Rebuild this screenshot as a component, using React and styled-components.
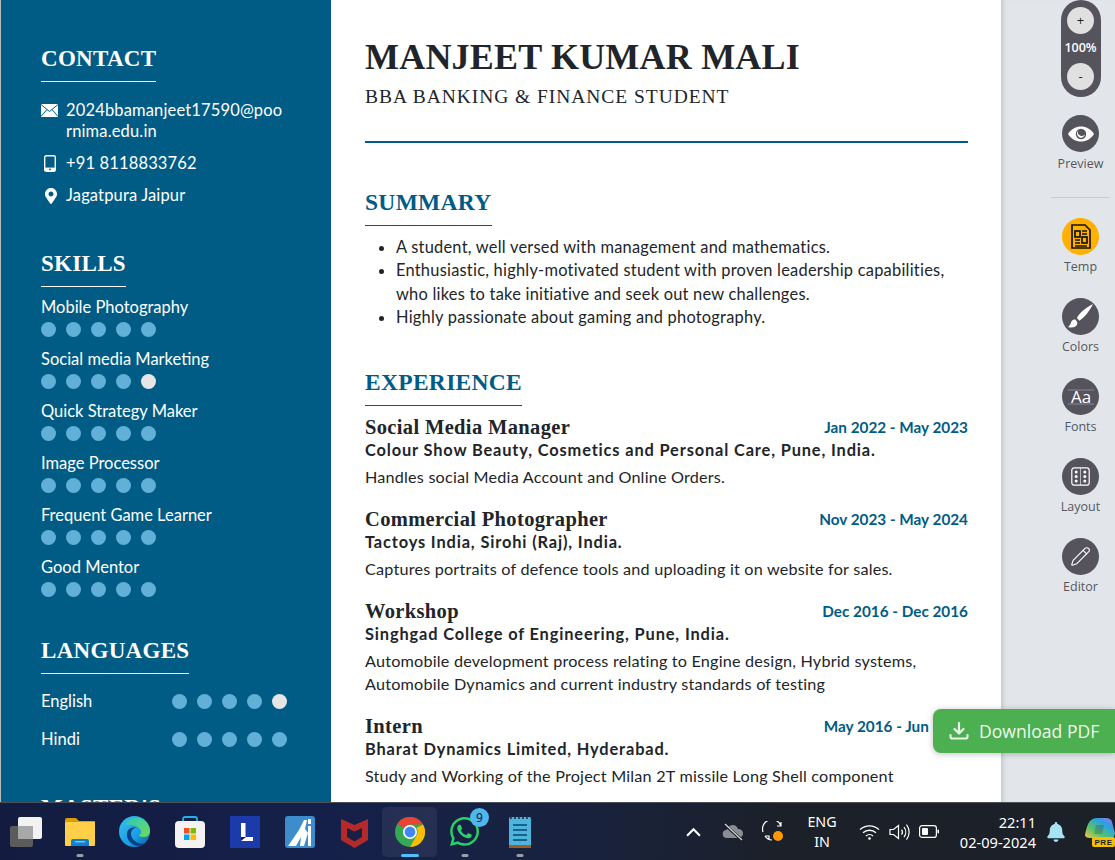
import React from "react";
import styled, { createGlobalStyle } from "styled-components";
import { FaMapMarkerAlt, FaWhatsapp, FaBell } from "react-icons/fa";
import { Pencil } from "lucide-react";

const BLUE = "#005c85";
const BODY = `"Lato", "Noto Sans", sans-serif`;
const SERIF = `"Liberation Serif", "DejaVu Serif", serif`;
const UI = `"Open Sans", "Noto Sans", sans-serif`;

const Global = createGlobalStyle`
  html, body { margin: 0; padding: 0; height: 860px; overflow: hidden; background: #fff; }
  * { box-sizing: border-box; }
`;

const Screen = styled.div`
  position: relative;
  width: 1115px;
  height: 860px;
  display: flex;
  flex-direction: column;
  overflow: hidden;
  font-family: ${BODY};
`;
const Workspace = styled.div`
  flex: 0 0 802px;
  display: flex;
  overflow: hidden;
`;

/* left column */
const Sidebar = styled.aside`
  width: 331px;
  flex: none;
  height: 860px;
  background: ${BLUE};
  border-left: 1px solid #b9b9b9;
  padding: 43px 40px 0 40px;
  color: #fff;
`;
const SideTitle = styled.h2`
  display: inline-block;
  margin: ${(p) => p.$top || 0}px 0 0;
  padding-bottom: 7px;
  border-bottom: 1px solid #fff;
  font: 700 23px/31px ${SERIF};
  letter-spacing: 0.3px;
  vertical-align: top;
`;
const ContactList = styled.div`
  margin-top: 18px;
  display: flex;
  flex-direction: column;
  gap: 11px;
`;
const ContactRow = styled.div`
  display: flex;
  font-size: 16.5px;
  line-height: 21px;
  letter-spacing: 0.15px;
  width: 245px;
`;
const ContactIcon = styled.span`
  flex: 0 0 25px;
  height: 21px;
  display: flex;
  align-items: center;
  padding-left: ${(p) => p.$pad || 0}px;
`;
const ContactText = styled.span`
  flex: 1;
  min-width: 0;
  overflow-wrap: anywhere;
`;
const SkillList = styled.div`
  margin-top: 9px;
  display: flex;
  flex-direction: column;
  gap: 11px;
`;
const SkillName = styled.div`
  font-size: 16.5px;
  line-height: 22px;
  margin-bottom: 4px;
`;
const Dots = styled.div`
  display: flex;
  gap: 10px;
`;
const Dot = styled.span`
  width: 15px;
  height: 15px;
  border-radius: 50%;
  background: ${(p) => (p.$off ? "#e6e6e6" : "#60b0d8")};
`;
const LangList = styled.div`
  margin-top: 8px;
`;
const LangRow = styled.div`
  height: 38px;
  width: 246px;
  display: flex;
  align-items: center;
  justify-content: space-between;
  font-size: 16.5px;
`;

/* resume body */
const Sheet = styled.main`
  width: 670px;
  flex: none;
  background: #fff;
  padding: 35px 33px 0 34px;
  color: #212529;
`;
const Name = styled.h1`
  margin: 0;
  font: 700 36px/44px ${SERIF};
  letter-spacing: 0.2px;
`;
const Role = styled.div`
  margin-top: 6px;
  font: 400 19.5px/24px ${SERIF};
  letter-spacing: 0.95px;
`;
const Rule = styled.hr`
  margin: 32px 0 44px;
  border: 0;
  height: 2px;
  background: ${BLUE};
`;
const MainTitle = styled.h2`
  display: inline-block;
  margin: ${(p) => p.$top || 0}px 0 0;
  padding-bottom: 7px;
  border-bottom: 1px solid ${BLUE};
  color: ${BLUE};
  font: 700 23.5px/31px ${SERIF};
  letter-spacing: 0.3px;
  vertical-align: top;
`;
const Bullets = styled.ul`
  margin: 9px 0 0;
  padding: 0 0 0 31px;
  font-size: 16.4px;
  line-height: 23.3px;
  letter-spacing: 0.24px;
`;
const Jobs = styled.div`
  margin-top: 9px;
  display: flex;
  flex-direction: column;
  gap: 19.3px;
`;
const JobHead = styled.div`
  display: flex;
  justify-content: space-between;
  align-items: center;
  height: 24px;
`;
const JobTitle = styled.div`
  font: 700 20.5px/24px ${SERIF};
  letter-spacing: 0.35px;
`;
const JobDate = styled.div`
  color: ${BLUE};
  font-size: 15.3px;
  font-weight: 700;
  white-space: nowrap;
`;
const Company = styled.div`
  font-size: 16.4px;
  font-weight: 700;
  line-height: 22px;
  letter-spacing: 0.85px;
`;
const JobText = styled.div`
  margin-top: 3.8px;
  font-size: 16.2px;
  line-height: 23px;
  letter-spacing: 0.2px;
`;

/* tool rail */
const Rail = styled.nav`
  flex: 1;
  background: #e2e6ea;
  padding-left: 50px;
  box-shadow: inset 5px 0 4px -3px #c3c6ca;
  font-family: ${UI};
`;
const RailCol = styled.div`
  width: 59px;
  display: flex;
  flex-direction: column;
  align-items: center;
`;
const ZoomPill = styled.div`
  width: 40px;
  height: 97px;
  border-radius: 20px;
  background: #55535c;
  padding-top: 7px;
  display: flex;
  flex-direction: column;
  align-items: center;
  color: #fff;
  margin-bottom: 18px;
`;
const ZoomBtn = styled.div`
  width: 27px;
  height: 27px;
  border-radius: 50%;
  background: #e0e0e0;
  color: #222;
  font-size: 13px;
  line-height: 27px;
  text-align: center;
`;
const ZoomValue = styled.div`
  font-size: 12.5px;
  font-weight: 600;
  line-height: 27px;
  margin-bottom: 2px;
  white-space: nowrap;
`;
const Tool = styled.div`
  width: 59px;
  height: 56px;
  display: flex;
  flex-direction: column;
  align-items: center;
  margin-bottom: ${(p) => p.$after || 24}px;
`;
const ToolCircle = styled.div`
  width: 37px;
  height: 37px;
  flex: none;
  border-radius: 50%;
  background: ${(p) => (p.$active ? "#ffb000" : "#55535c")};
  color: #fff;
  display: flex;
  align-items: center;
  justify-content: center;
`;
const ToolLabel = styled.div`
  margin-top: 4px;
  font-size: 12.5px;
  line-height: 16px;
  color: #55585c;
`;
const RailDivider = styled.div`
  width: 59px;
  height: 1px;
  background: #c9cdd1;
  margin: 0 0 20px;
`;

const DownloadBtn = styled.button`
  position: absolute;
  right: 0;
  top: 709px;
  width: 182px;
  height: 44px;
  border: 0;
  border-radius: 8px 0 0 8px;
  background: #4caf50;
  color: #f1f8f1;
  display: flex;
  align-items: center;
  gap: 10px;
  padding: 0 0 0 16px;
  font: 400 17.6px ${UI};
  box-shadow: 0 1px 6px rgba(0, 0, 0, 0.25);
`;

/* windows taskbar */
const Taskbar = styled.footer`
  position: relative;
  flex: 0 0 58px;
  display: flex;
  align-items: center;
  justify-content: space-between;
  border-top: 1px solid #4b4f58;
  background: linear-gradient(90deg, #131c40 0%, #15204a 30%, #18223f 50%, #1b2029 70%, #1b2029 100%);
  color: #fff;
  font-family: "Noto Sans", "Open Sans", sans-serif;
`;
const AppRow = styled.div`
  display: flex;
`;
const AppSlot = styled.div`
  position: relative;
  width: ${(p) => p.$w || 55}px;
  height: 50px;
  display: flex;
  align-items: center;
  justify-content: center;
  border-radius: 5px;
  background: ${(p) => (p.$active ? "rgba(255,255,255,0.07)" : "transparent")};
  &::after {
    content: "";
    display: ${(p) => (p.$dot ? "block" : "none")};
    position: absolute;
    bottom: 0;
    left: 50%;
    transform: translateX(-50%);
    width: ${(p) => (p.$active ? 18 : 7)}px;
    height: 3px;
    border-radius: 2px;
    background: ${(p) => (p.$active ? "#4cc2ff" : "#9a9ea8")};
  }
`;
const Badge = styled.span`
  position: absolute;
  top: 1px;
  right: 3px;
  width: 19px;
  height: 19px;
  border-radius: 50%;
  background: #4fb6ee;
  color: #10202e;
  font-size: 12px;
  line-height: 19px;
  text-align: center;
`;
const Tray = styled.div`
  display: flex;
  align-items: center;
  height: 100%;
`;
const TrayIcon = styled.div`
  width: ${(p) => p.$w}px;
  margin-right: ${(p) => p.$gap || 0}px;
  display: flex;
  justify-content: center;
  align-items: center;
`;
const Lang = styled.div`
  width: 54px;
  margin: 0 5px 0 2px;
  text-align: center;
  font-size: 14.3px;
  line-height: 20px;
`;
const Clock = styled.div`
  width: 84px;
  margin-right: 5px;
  text-align: right;
  font-size: 14.6px;
  line-height: 20px;
  white-space: nowrap;
`;

const Mail = () => (
  <svg width="17" height="13" viewBox="0 0 17 13">
    <rect width="17" height="13" fill="#fff" />
    <path d="M0 .5 8.5 7.5 17 .5M0 12.5 6 5.5M17 12.5 11 5.5" fill="none" stroke={BLUE} strokeWidth="1" />
  </svg>
);
const Phone = () => (
  <svg width="12" height="17" viewBox="0 0 12 17">
    <rect x=".7" y=".7" width="10.6" height="15.6" rx="1.6" fill="none" stroke="#fff" strokeWidth="1.4" />
    <rect x="1" y="12.6" width="10" height="3.4" fill="#fff" />
    <circle cx="6" cy="14.4" r=".9" fill={BLUE} />
  </svg>
);
const Eye = () => (
  <svg width="26" height="16" viewBox="0 0 26 16">
    <path d="M0 8C3 3 8 .5 13 .5S23 3 26 8c-3 5-8 7.500-13 7.500S3 13 0 8Z" fill="#fff" />
    <circle cx="13" cy="8" r="5.200" fill="#55535c" />
    <path d="M10.500 4.500a4 4 0 1 0 6.500 3.500 3.500 3.500 0 0 1-6.500-3.500Z" fill="#fff" />
  </svg>
);
const TemplateDoc = () => (
  <svg width="20" height="25" viewBox="0 0 20 25" fill="none" stroke="#161205" strokeWidth="1.700">
    <path d="M1 1h13l5 5v18H1Z" />
    <rect x="4" y="7" width="5" height="6" />
    <rect x="11" y="13" width="5" height="6" />
    <path d="M11 7h5M11 10h5M4 16h5M4 19h5M4 22h12" />
  </svg>
);
const Brush = () => (
  <svg width="25" height="25" viewBox="0 0 24 24" fill="#fff">
    <path d="M24 0C17 3.500 11 8.500 8.500 13.500l2.500 2.500C15.500 13 20.500 7 24 0Z" />
    <path d="M7 14.800c-3 0-4 2-4.500 4C2.200 20.300 1 21.300 0 22c3 1.200 7 .7 8.500-1.800 1-1.500.5-3.400-1.500-5.400Z" />
  </svg>
);
const FontsGlyph = () => (
  <svg width="30" height="30" viewBox="0 0 30 30">
    <path d="M2 8h26M2 22h26" stroke="#8b8a90" strokeWidth="1" />
    <text x="15" y="21" textAnchor="middle" fill="#fff" fontFamily="Open Sans, sans-serif" fontSize="17">Aa</text>
  </svg>
);
const LayoutGlyph = () => (
  <svg width="19" height="19" viewBox="0 0 19 19" fill="none" stroke="#fff" strokeWidth="1.200">
    <rect x=".8" y=".8" width="17.400" height="17.400" rx="2.500" />
    <path d="M9.500 1v17" strokeWidth=".6" />
    {[5, 9.5, 14].map((y) =>
      [5.2, 13.8].map((x) => <circle key={`${x}-${y}`} cx={x} cy={y} r="1.500" fill="#fff" stroke="none" />)
    )}
  </svg>
);
const DownloadIcon = () => (
  <svg width="20" height="18" viewBox="0 0 20 18" fill="none" stroke="#e8f5e9" strokeWidth="2.200" strokeLinecap="round" strokeLinejoin="round">
    <path d="M10 1v10M5.500 7 10 11.500 14.500 7M1.500 13v1.500a2 2 0 0 0 2 2h13a2 2 0 0 0 2-2V13" />
  </svg>
);

const TaskView = () => (
  <svg width="32" height="30" viewBox="0 0 32 30">
    <rect y="9" width="23" height="21" rx="2" fill="#5b5b5b" />
    <rect x="8" width="24" height="22" rx="2" fill="#f2f2f2" />
    <rect x="8" y="9" width="15" height="13" fill="#a8a8a8" />
  </svg>
);
const Folder = () => (
  <svg width="30" height="28" viewBox="0 0 30 28">
    <path d="M0 2a2 2 0 0 1 2-2h9l3 3h16v4H0Z" fill="#d99e06" />
    <rect y="4" width="30" height="24" rx="1" fill="#ffcf48" />
    <path d="M6 28v-5a2 2 0 0 1 2-2h14a2 2 0 0 1 2 2v5Z" fill="#0f80d4" />
    <rect x="10" y="23" width="10" height="1.500" fill="#7cc6f2" />
  </svg>
);
const Edge = () => (
  <svg width="31" height="31" viewBox="0 0 31 31">
    <defs>
      <linearGradient id="edgeA" x1="0" y1="0" x2="1" y2="1">
        <stop offset="0" stopColor="#35c1f1" />
        <stop offset=".6" stopColor="#1b9de2" />
        <stop offset="1" stopColor="#0c59a4" />
      </linearGradient>
      <linearGradient id="edgeB" x1="0" y1="0" x2="1" y2="1">
        <stop offset="0" stopColor="#2fc7c1" />
        <stop offset="1" stopColor="#6fdc4f" />
      </linearGradient>
    </defs>
    <circle cx="15.500" cy="15.500" r="15.500" fill="url(#edgeA)" />
    <path d="M6 9C9 3 17 0 23 3c5 2.500 8 7 8 12 0 3-2 6-6 6-3 0-5-1-5-2 2-1 3-3 1-6-3-4-10-5-15-4Z" fill="url(#edgeB)" />
    <path d="M12 18c0-4 3-7 7-6-4-2-10 0-11 5-1 6 4 12 11 13 3 0 6-1 8-3-3 1-7 1-10-1-3-2-5-5-5-8Z" fill="#0b3f86" />
  </svg>
);
const Store = () => (
  <svg width="30" height="32" viewBox="0 0 30 32">
    <path d="M8 7V3a2 2 0 0 1 2-2h10a2 2 0 0 1 2 2v4" fill="none" stroke="#2aaee6" strokeWidth="1.800" />
    <rect y="5" width="30" height="27" rx="4" fill="#f5f3f1" />
    <rect x="9" y="12" width="5.500" height="5.500" fill="#f25022" />
    <rect x="15.500" y="12" width="5.500" height="5.500" fill="#7fba00" />
    <rect x="9" y="18.500" width="5.500" height="5.500" fill="#00a4ef" />
    <rect x="15.500" y="18.500" width="5.500" height="5.500" fill="#ffb900" />
  </svg>
);
const LApp = () => (
  <svg width="30" height="32" viewBox="0 0 30 32">
    <rect width="30" height="32" fill="#1c3aa9" />
    <path d="M11 7h4.500v14H23v4H11Z" fill="#fff" />
    <path d="M11 25l5-4H11Z" fill="#0f2170" />
  </svg>
);
const AiApp = () => (
  <svg width="30" height="32" viewBox="0 0 30 32">
    <rect width="30" height="32" rx="3" fill="#3d8ccb" />
    <path d="M3 30 14 14l5-10h3l-2 9 3 4-4 13h-4l1-9-5 9Z" fill="#fff" />
    <path d="M23 3h3v5h-3ZM23 10h3v20h-3Z" fill="#fff" />
  </svg>
);
const McAfee = () => (
  <svg width="27" height="32" viewBox="0 0 27 32">
    <path d="M0 3 13.500 9 27 3v21l-13.500 8L0 24Z" fill="#b42a2a" />
    <path d="M6 12l7.500 3.500L21 12v9l-7.500 4.500L6 21Z" fill="#1a2045" />
  </svg>
);
const Chrome = () => (
  <svg width="30" height="30" viewBox="0 0 30 30">
    <circle cx="15" cy="15" r="15" fill="#34a853" />
    <path d="M15 0a15 15 0 0 1 13 7.500H15a7.500 7.500 0 0 0-6.500 3.800L2.400 6.800A15 15 0 0 1 15 0Z" fill="#ea4335" />
    <path d="M28 7.500A15 15 0 0 1 15 30l6.500-11.200A7.500 7.500 0 0 0 21.500 11Z" fill="#fbbc04" />
    <circle cx="15" cy="15" r="7" fill="#fff" />
    <circle cx="15" cy="15" r="5.400" fill="#4285f4" />
  </svg>
);
const Notepad = () => (
  <svg width="22" height="32" viewBox="0 0 22 32">
    <rect y="1" width="22" height="31" rx="1.500" fill="#4db5dc" />
    <rect y="29" width="22" height="3" fill="#a55a1f" />
    <path d="M2 0v3M6 0v3M10 0v3M14 0v3M18 0v3" stroke="#1a2a44" strokeWidth="1.500" />
    <path d="M4 9h14M4 14h14M4 19h14M4 24h14" stroke="#17618c" strokeWidth="2" />
  </svg>
);

const Chevron = () => (
  <svg width="15" height="10" viewBox="0 0 14 9" fill="none" stroke="#fff" strokeWidth="2">
    <path d="M1 8 7 2l6 6" />
  </svg>
);
const CloudOff = () => (
  <svg width="22" height="18" viewBox="0 0 22 18">
    <path d="M5 15a4 4 0 0 1-.5-8A6 6 0 0 1 16 6a4.500 4.500 0 0 1 1 9Z" fill="#8a8d93" />
    <path d="M2 1l18 16" stroke="#1b2029" strokeWidth="3" />
    <path d="M3 1l17 16" stroke="#d6d6d6" strokeWidth="1.200" />
  </svg>
);
const Sync = () => (
  <svg width="22" height="22" viewBox="0 0 22 22" fill="none" stroke="#fff" strokeWidth="1.200">
    <path d="M1 11A8.500 8.500 0 0 1 19 5M19 1v4h-4M3 15h4v4M3 15a8.500 8.500 0 0 0 7 4" />
    <circle cx="16" cy="15" r="5" fill="#ff9800" stroke="none" />
  </svg>
);
const Wifi = () => (
  <svg width="21" height="16" viewBox="0 0 21 16" fill="none" stroke="#fff" strokeWidth="1.300">
    <path d="M1 5.500a14 14 0 0 1 19 0M4 8.800a9.500 9.500 0 0 1 13 0M7 12a5 5 0 0 1 7 0" />
    <circle cx="10.500" cy="14.500" r="1.300" fill="#fff" stroke="none" />
  </svg>
);
const Volume = () => (
  <svg width="21" height="18" viewBox="0 0 21 18" fill="none" stroke="#fff" strokeWidth="1.200">
    <path d="M1 6.500h3.500L9.500 2.500v13L4.500 11.500H1Z" />
    <path d="M12.500 6.500a4 4 0 0 1 0 5M15 4a8 8 0 0 1 0 10M17.500 1.500a12 12 0 0 1 0 15" />
  </svg>
);
const Battery = () => (
  <svg width="20" height="13" viewBox="0 0 20 13">
    <rect x=".6" y=".6" width="16.800" height="11.800" rx="2.500" fill="none" stroke="#fff" strokeWidth="1.200" />
    <rect x="3" y="3" width="6" height="7" rx="1" fill="#fff" />
    <rect x="18.500" y="4.500" width="1.500" height="4" rx=".7" fill="#fff" />
  </svg>
);
const Copilot = () => (
  <svg width="30" height="30" viewBox="0 0 30 30">
    <defs>
      <linearGradient id="copA" x1="0" y1="1" x2="1" y2="0">
        <stop offset="0" stopColor="#f6c544" />
        <stop offset=".35" stopColor="#57c06e" />
        <stop offset=".7" stopColor="#2a9fe8" />
        <stop offset="1" stopColor="#c56ae0" />
      </linearGradient>
    </defs>
    <path d="M0 18C1 12 3 6 5 4c2-2 4-3 7-3h9c3 0 5 1 6 4l3 11c0 3-2 5-5 5H5c-3 0-5-1-5-3Z" fill="url(#copA)" />
    <path d="M11 8h8l-2 9H9Z" fill="#1b2029" opacity=".2" />
    <rect x="7" y="20" width="23" height="10" rx="2" fill="#f6c000" />
    <text x="18.500" y="28.300" textAnchor="middle" fontFamily="Liberation Sans, sans-serif" fontWeight="700" fontSize="8" letterSpacing=".6" fill="#1b2029">PRE</text>
  </svg>
);

const skills = [
  ["Mobile Photography", 5],
  ["Social media Marketing", 4],
  ["Quick Strategy Maker", 5],
  ["Image Processor", 5],
  ["Frequent Game Learner", 5],
  ["Good Mentor", 5],
];
const languages = [
  ["English", 4],
  ["Hindi", 5],
];
const jobs = [
  {
    title: "Social Media Manager",
    date: "Jan 2022 - May 2023",
    company: "Colour Show Beauty, Cosmetics and Personal Care, Pune, India.",
    text: "Handles social Media Account and Online Orders.",
  },
  {
    title: "Commercial Photographer",
    date: "Nov 2023 - May 2024",
    company: "Tactoys India, Sirohi (Raj), India.",
    text: "Captures portraits of defence tools and uploading it on website for sales.",
  },
  {
    title: "Workshop",
    date: "Dec 2016 - Dec 2016",
    company: "Singhgad College of Engineering, Pune, India.",
    text: "Automobile development process relating to Engine design, Hybrid systems, Automobile Dynamics and current industry standards of testing",
  },
  {
    title: "Intern",
    date: "May 2016 - Jun 2016",
    company: "Bharat Dynamics Limited, Hyderabad.",
    text: "Study and Working of the Project Milan 2T missile Long Shell component",
  },
];
const tools = [
  { label: "Temp", icon: <TemplateDoc />, active: true },
  { label: "Colors", icon: <Brush /> },
  { label: "Fonts", icon: <FontsGlyph /> },
  { label: "Layout", icon: <LayoutGlyph /> },
  { label: "Editor", icon: <Pencil size={21} strokeWidth={1.3} /> },
];

const Rating = ({ value }) => (
  <Dots>
    {[0, 1, 2, 3, 4].map((i) => (
      <Dot key={i} $off={i >= value} />
    ))}
  </Dots>
);

export default function App() {
  return (
    <Screen>
      <Global />
      <Workspace>
        <Sidebar>
          <SideTitle>CONTACT</SideTitle>
          <ContactList>
            <ContactRow>
              <ContactIcon><Mail /></ContactIcon>
              <ContactText>2024bbamanjeet17590@poornima.edu.in</ContactText>
            </ContactRow>
            <ContactRow>
              <ContactIcon $pad={3}><Phone /></ContactIcon>
              <ContactText>+91 8118833762</ContactText>
            </ContactRow>
            <ContactRow>
              <ContactIcon $pad={2}><FaMapMarkerAlt size={16} color="#fff" /></ContactIcon>
              <ContactText>Jagatpura Jaipur</ContactText>
            </ContactRow>
          </ContactList>
          <SideTitle $top={42}>SKILLS</SideTitle>
          <SkillList>
            {skills.map(([name, value]) => (
              <div key={name}>
                <SkillName>{name}</SkillName>
                <Rating value={value} />
              </div>
            ))}
          </SkillList>
          <SideTitle $top={38}>LANGUAGES</SideTitle>
          <LangList>
            {languages.map(([name, value]) => (
              <LangRow key={name}>
                <span>{name}</span>
                <Rating value={value} />
              </LangRow>
            ))}
          </LangList>
          <SideTitle $top={34}>MASTER'S</SideTitle>
        </Sidebar>

        <Sheet>
          <Name>MANJEET KUMAR MALI</Name>
          <Role>BBA BANKING &amp; FINANCE STUDENT</Role>
          <Rule />
          <MainTitle>SUMMARY</MainTitle>
          <Bullets>
            <li>A student, well versed with management and mathematics.</li>
            <li>Enthusiastic, highly-motivated student with proven leadership capabilities, who likes to take initiative and seek out new challenges.</li>
            <li>Highly passionate about gaming and photography.</li>
          </Bullets>
          <MainTitle $top={39}>EXPERIENCE</MainTitle>
          <Jobs>
            {jobs.map((job) => (
              <div key={job.title}>
                <JobHead>
                  <JobTitle>{job.title}</JobTitle>
                  <JobDate>{job.date}</JobDate>
                </JobHead>
                <Company>{job.company}</Company>
                <JobText>{job.text}</JobText>
              </div>
            ))}
          </Jobs>
        </Sheet>

        <Rail>
          <RailCol>
            <ZoomPill>
              <ZoomBtn>+</ZoomBtn>
              <ZoomValue>100%</ZoomValue>
              <ZoomBtn>-</ZoomBtn>
            </ZoomPill>
            <Tool $after={26}>
              <ToolCircle><Eye /></ToolCircle>
              <ToolLabel>Preview</ToolLabel>
            </Tool>
            <RailDivider />
            {tools.map((t) => (
              <Tool key={t.label}>
                <ToolCircle $active={t.active}>{t.icon}</ToolCircle>
                <ToolLabel>{t.label}</ToolLabel>
              </Tool>
            ))}
          </RailCol>
        </Rail>
      </Workspace>

      <DownloadBtn>
        <DownloadIcon />
        Download PDF
      </DownloadBtn>

      <Taskbar>
        <AppRow>
          <AppSlot $w={52}><TaskView /></AppSlot>
          <AppSlot $dot><Folder /></AppSlot>
          <AppSlot><Edge /></AppSlot>
          <AppSlot><Store /></AppSlot>
          <AppSlot><LApp /></AppSlot>
          <AppSlot><AiApp /></AppSlot>
          <AppSlot><McAfee /></AppSlot>
          <AppSlot $active $dot><Chrome /></AppSlot>
          <AppSlot $dot>
            <FaWhatsapp size={33} color="#25d366" />
            <Badge>9</Badge>
          </AppSlot>
          <AppSlot $dot><Notepad /></AppSlot>
        </AppRow>
        <Tray>
          <TrayIcon $w={40}><Chevron /></TrayIcon>
          <TrayIcon $w={40}><CloudOff /></TrayIcon>
          <TrayIcon $w={40}><Sync /></TrayIcon>
          <Lang>ENG<br />IN</Lang>
          <TrayIcon $w={30}><Wifi /></TrayIcon>
          <TrayIcon $w={30}><Volume /></TrayIcon>
          <TrayIcon $w={30} $gap={8}><Battery /></TrayIcon>
          <Clock>22:11<br />02-09-2024</Clock>
          <TrayIcon $w={30} $gap={14}><FaBell size={20} color="#a6e3f5" /></TrayIcon>
          <TrayIcon $w={30}><Copilot /></TrayIcon>
        </Tray>
      </Taskbar>
    </Screen>
  );
}
